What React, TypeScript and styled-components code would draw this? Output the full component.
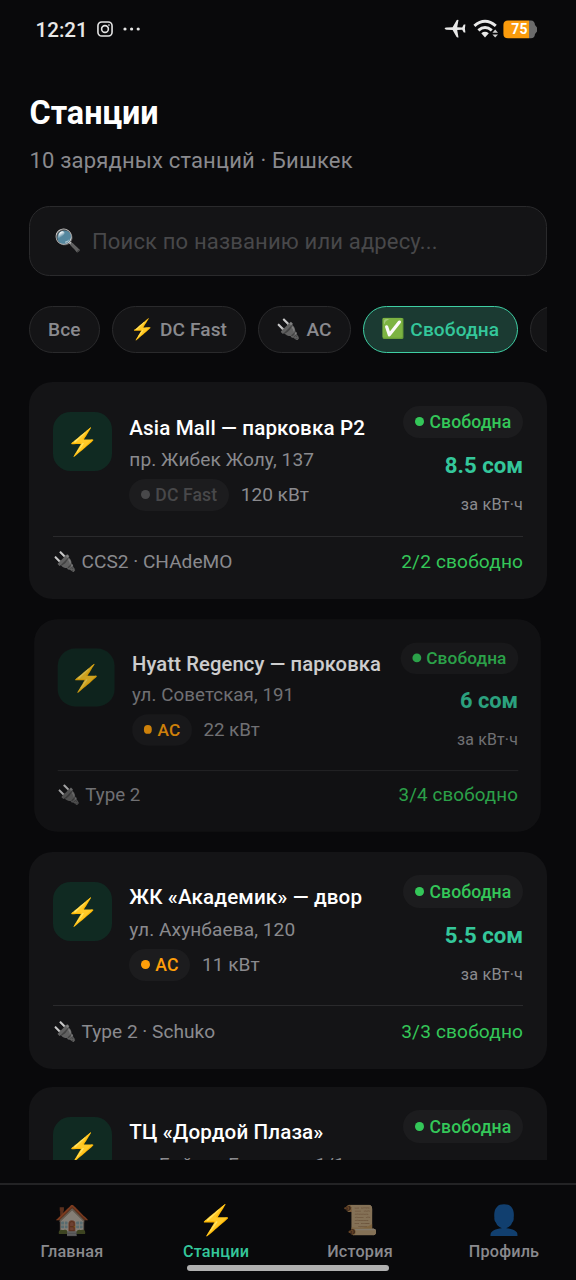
import React from 'react';
import styled, { createGlobalStyle, css } from 'styled-components';

const c = {
  bg: '#09090b',
  card: '#141416',
  badge: '#1c1c1e',
  line: '#2a2a2c',
  muted: '#8a8a8e',
  faint: '#48484a',
  accent: '#34c79b',
  green: '#34c759',
  orange: '#ff9f0a',
};

const Global = createGlobalStyle`
  * { box-sizing: border-box; }
  body { margin: 0; background: ${c.bg}; }
`;

const Screen = styled.div`
  width: 576px;
  height: 1280px;
  display: flex;
  flex-direction: column;
  overflow: hidden;
  background: ${c.bg};
  color: #fff;
  font-family: Roboto, 'Noto Color Emoji', sans-serif;
  white-space: nowrap;
`;

const StatusBar = styled.div`
  height: 58px;
  padding: 0 38px 0 35.5px;
  display: flex;
  align-items: center;
  justify-content: space-between;
`;
const StatusGroup = styled.div<{ $gap: number }>`
  display: flex;
  align-items: center;
  gap: ${(p) => p.$gap}px;
`;
const Clock = styled.span`
  font-size: 20.6px;
  font-weight: 500;
  line-height: 24px;
  padding-top: 2px;
  color: #e8e8e8;
`;

const Header = styled.header`
  padding: 36px 29.5px 0;
`;
const Title = styled.h1`
  margin: 0;
  font-size: 32.3px;
  line-height: 38px;
  font-weight: 700;
`;
const Subtitle = styled.p`
  margin: 15.5px 0 0;
  font-size: 22px;
  line-height: 26px;
  letter-spacing: 0.17px;
  color: ${c.muted};
`;

const Search = styled.div`
  margin: 32.5px 29.4px 0;
  height: 70px;
  border: 1.47px solid ${c.line};
  border-radius: 20.6px;
  background: ${c.card};
  padding-left: 23.6px;
  display: flex;
  align-items: center;
  gap: 10.6px;
  font-size: 22px;
  letter-spacing: 0.16px;
  color: ${c.faint};
`;

const Chips = styled.div`
  margin: 29.5px 29.4px 0;
  display: flex;
  gap: 12.2px;
  overflow: hidden;
`;
const Chip = styled.div<{ $active?: boolean }>`
  flex: none;
  height: 47px;
  padding: 1px 18px 0 17.6px;
  display: flex;
  align-items: center;
  gap: 5px;
  border: 1.47px solid ${c.line};
  border-radius: 24px;
  background: ${c.card};
  color: ${c.muted};
  font-size: 19.1px;
  font-weight: 500;
  letter-spacing: 0.1px;
  ${(p) =>
    p.$active &&
    css`
      background: #1b3a32;
      border-color: #3fcfa4;
      color: ${c.accent};
    `}
`;

const List = styled.main`
  flex: 1;
  min-height: 0;
  margin: 29.5px 0 23px;
  padding: 0 29.4px;
  display: flex;
  flex-direction: column;
  gap: 17.6px;
  overflow: hidden;
`;
const Card = styled.article<{ $pressed?: boolean }>`
  flex: none;
  height: 217.4px;
  padding: 23.5px;
  border-radius: 23.5px;
  background: ${c.card};
  ${(p) =>
    p.$pressed &&
    css`
      transform: scale(0.98);
      opacity: 0.8;
    `}
`;
const CardTop = styled.div`
  display: flex;
  align-items: flex-start;
  height: 131px;
  border-bottom: 1.47px solid ${c.line};
`;
const IconTile = styled.div`
  flex: none;
  width: 58.8px;
  height: 58.8px;
  margin: 6.4px 17.6px 0 0;
  padding: 3px 0 0 1px;
  border-radius: 17.6px;
  background: #102a22;
  display: flex;
  align-items: center;
  justify-content: center;
`;
const Info = styled.div`
  flex: 1;
  min-width: 0;
  padding-top: 10px;
`;
const Name = styled.div`
  font-size: 20.6px;
  line-height: 24px;
  font-weight: 500;
  letter-spacing: 0.13px;
`;
const Address = styled.div`
  margin-top: 9.3px;
  font-size: 19.1px;
  line-height: 22px;
  letter-spacing: 0.08px;
  color: ${c.muted};
`;
const PowerRow = styled.div`
  margin-top: 7.8px;
  display: flex;
  align-items: center;
  gap: 11.75px;
  font-size: 19.1px;
  color: ${c.muted};
`;
const Badge = styled.span<{ $color: string }>`
  height: 32.6px;
  padding: 1px 11.75px 0;
  display: inline-flex;
  align-items: center;
  gap: 5.5px;
  border-radius: 17px;
  background: ${c.badge};
  color: ${(p) => p.$color};
  font-size: 17.6px;
  font-weight: 500;
  letter-spacing: 0.1px;
  &::before {
    content: '';
    width: 8.8px;
    height: 8.8px;
    margin-top: -1px;
    border-radius: 50%;
    background: currentColor;
  }
`;
const Side = styled.div`
  flex: none;
  display: flex;
  flex-direction: column;
  align-items: flex-end;
`;
const Price = styled.div`
  margin-top: 14.2px;
  font-size: 22.2px;
  line-height: 26px;
  font-weight: 700;
  color: ${c.accent};
`;
const Unit = styled.div`
  margin-top: 16.6px;
  font-size: 16.2px;
  line-height: 20px;
  letter-spacing: 0.2px;
  color: ${c.muted};
`;
const CardBottom = styled.div`
  margin-top: 13.8px;
  display: flex;
  justify-content: space-between;
  font-size: 19.1px;
  line-height: 24px;
  color: ${c.muted};
`;
const Plugs = styled.span`
  display: flex;
  align-items: center;
  gap: 5px;
`;
const Free = styled.span`
  letter-spacing: 0.15px;
  color: ${c.green};
`;

const Nav = styled.nav`
  height: 97.5px;
  border-top: 2px solid #232325;
  display: grid;
  grid-template-columns: repeat(4, 1fr);
  position: relative;
`;
const Tab = styled.div<{ $active?: boolean }>`
  display: flex;
  flex-direction: column;
  align-items: center;
  padding-top: 19px;
  gap: 4px;
  font-size: 16.2px;
  line-height: 22px;
  font-weight: 500;
  letter-spacing: 0.22px;
  color: ${(p) => (p.$active ? c.accent : c.muted)};
`;
const Dim = styled.span<{ $on?: boolean }>`
  opacity: ${(p) => (p.$on ? 1 : 0.5)};
  display: flex;
`;
const HomeBar = styled.div`
  position: absolute;
  left: 187px;
  bottom: 9px;
  width: 202px;
  height: 6px;
  border-radius: 3px;
  background: #b0b0b0;
`;
const Emoji = styled.span<{ $s: number }>`
  font-size: ${(p) => p.$s}px;
  line-height: 1.17;
  letter-spacing: 0;
`;

const stations = [
  { name: 'Asia Mall — парковка P2', addr: 'пр. Жибек Жолу, 137', type: 'DC Fast', kw: '120 кВт', price: '8.5 сом', plugs: 'CCS2 · CHAdeMO', free: '2/2 свободно' },
  { name: 'Hyatt Regency — парковка', addr: 'ул. Советская, 191', type: 'AC', kw: '22 кВт', price: '6 сом', plugs: 'Type 2', free: '3/4 свободно', pressed: true },
  { name: 'ЖК «Академик» — двор', addr: 'ул. Ахунбаева, 120', type: 'AC', kw: '11 кВт', price: '5.5 сом', plugs: 'Type 2 · Schuko', free: '3/3 свободно' },
  { name: 'ТЦ «Дордой Плаза»', addr: 'ул. Байтик Баатыра, 1/1' },
];

const tabs = [
  { icon: '🏠', label: 'Главная' },
  { icon: '⚡', label: 'Станции', on: true },
  { icon: '📜', label: 'История' },
  { icon: '👤', label: 'Профиль' },
];

const Instagram = () => (
  <svg width="16" height="16" viewBox="0 0 17 17" fill="none" stroke="#e4e4e4" strokeWidth="1.7">
    <rect x="1" y="1" width="15" height="15" rx="4" />
    <circle cx="8.5" cy="8.5" r="3.6" />
    <circle cx="12.7" cy="4.3" r="0.6" fill="#e4e4e4" strokeWidth="0.6" />
  </svg>
);
const Dots = () => (
  <svg width="18" height="4" viewBox="0 0 18 4" fill="#e4e4e4">
    <circle cx="2" cy="2" r="1.6" />
    <circle cx="8.6" cy="2" r="1.6" />
    <circle cx="15.2" cy="2" r="1.6" />
  </svg>
);
const Plane = () => (
  <svg width="22" height="20" viewBox="0 0 22 20" fill="#e8e8e8">
    <path d="M0.6 9.3 Q0.9 8.4 2.4 8.4 L8.6 8.2 L12.6 1.2 Q13 0.6 14.5 0.9 L13.2 8.2 L18.2 8.4 L19.8 5.6 L21.4 5.6 L20.9 9.5 L21.4 13.4 L19.8 13.4 L18.2 10.7 L13.2 10.9 L14.5 18.4 Q13 18.7 12.6 18 L8.6 10.9 L2.4 10.7 Q0.9 10.6 0.6 9.3Z" />
  </svg>
);
const Wifi = () => (
  <svg width="26" height="20" viewBox="0 0 26 20">
    <g fill="none" stroke="#e8e8e8" strokeWidth="3">
      <path d="M1.4 6.9 Q12 -2.4 22.8 6.9" />
      <path d="M5.4 11.4 Q12 5.6 18.8 11.4" />
    </g>
    <path d="M8.3 14.2 Q12 11.4 15.8 14.2 L12 18.4Z" fill="#e8e8e8" />
    <path d="M19.4 13.8 L22.2 10.6 L25 13.8Z M19.4 15.4 L22.2 18.6 L25 15.4Z" fill="#d0d0d0" />
  </svg>
);
const Battery = () => (
  <svg width="35" height="19" viewBox="0 0 35 19">
    <path d="M26 0.5 H28 Q31.6 0.5 32 5 L34 7.5 V11.5 L32 14 Q31.6 18.3 28 18.3 H26Z" fill="#6b6b6b" />
    <path d="M5 0.5 H26 V18.3 H5 Q0.4 18.3 0.4 13.7 V5 Q0.4 0.5 5 0.5Z" fill="#fb9b0c" />
    <text x="16.4" y="14.4" textAnchor="middle" fontFamily="Roboto" fontWeight="700" fontSize="14" fill="#fff">75</text>
  </svg>
);

export default function App() {
  return (
    <Screen>
      <Global />
      <StatusBar>
        <StatusGroup $gap={9.5}>
          <Clock>12:21</Clock>
          <Instagram />
          <Dots />
        </StatusGroup>
        <StatusGroup $gap={4}>
          <StatusGroup $gap={7}>
            <Plane />
            <Wifi />
          </StatusGroup>
          <Battery />
        </StatusGroup>
      </StatusBar>
      <Header>
        <Title>Станции</Title>
        <Subtitle>10 зарядных станций · Бишкек</Subtitle>
      </Header>
      <Search>
        <Emoji $s={22}>🔍</Emoji>
        Поиск по названию или адресу...
      </Search>
      <Chips>
        <Chip>Все</Chip>
        <Chip><Emoji $s={19.8}>⚡</Emoji>DC Fast</Chip>
        <Chip><Emoji $s={19.8}>🔌</Emoji>AC</Chip>
        <Chip $active><Emoji $s={19.2}>✅</Emoji>Свободна</Chip>
        <Chip>Занята</Chip>
      </Chips>
      <List>
        {stations.map((s) => (
          <Card key={s.name} $pressed={s.pressed}>
            <CardTop>
              <IconTile><Emoji $s={26.4}>⚡</Emoji></IconTile>
              <Info>
                <Name>{s.name}</Name>
                <Address>{s.addr}</Address>
                {s.type && (
                  <PowerRow>
                    <Badge $color={s.type === 'AC' ? c.orange : c.faint}>{s.type}</Badge>
                    {s.kw}
                  </PowerRow>
                )}
              </Info>
              <Side>
                <Badge $color={c.green}>Свободна</Badge>
                {s.price && (
                  <>
                    <Price>{s.price}</Price>
                    <Unit>за кВт·ч</Unit>
                  </>
                )}
              </Side>
            </CardTop>
            {s.plugs && (
              <CardBottom>
                <Plugs><Emoji $s={19}>🔌</Emoji>{s.plugs}</Plugs>
                <Free>{s.free}</Free>
              </CardBottom>
            )}
          </Card>
        ))}
      </List>
      <Nav>
        {tabs.map((t) => (
          <Tab key={t.label} $active={t.on}>
            <Dim $on={t.on}><Emoji $s={29}>{t.icon}</Emoji></Dim>
            {t.label}
          </Tab>
        ))}
        <HomeBar />
      </Nav>
    </Screen>
  );
}
